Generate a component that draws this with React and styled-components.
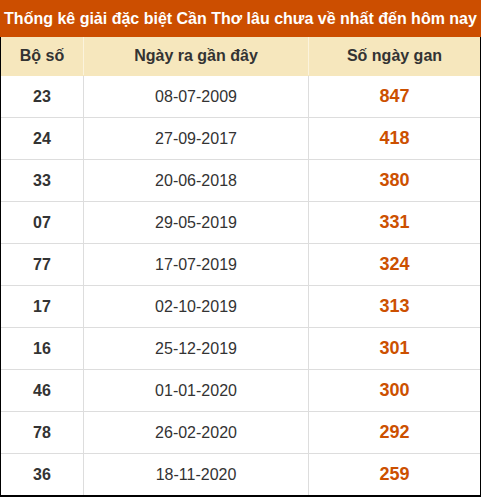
import React from "react";
import styled, { createGlobalStyle } from "styled-components";

const Global = createGlobalStyle`
  html, body { margin: 0; padding: 0; background: #fff; }
  body { font-family: "Liberation Sans", Arial, sans-serif; }
`;

const Wrap = styled.div`
  width: 481px;
  height: 497px;
  box-sizing: border-box;
  background: #000;
  padding: 0 1px 2px 1px;
  overflow: hidden;
`;

const Inner = styled.div`
  background: #fff;
`;

const Title = styled.div`
  height: 37px;
  margin: 0 -1px;
  background: #cc4e00;
  color: #fff;
  font-weight: bold;
  font-size: 16px;
  display: flex;
  align-items: center;
  justify-content: center;
  white-space: nowrap;
`;

const Row = styled.div`
  display: grid;
  grid-template-columns: 82px 225px 1fr;
  height: ${(p) => (p.$head ? 39 : 42)}px;
  box-sizing: border-box;
  background: ${(p) => (p.$head ? "#f6e7bd" : "#fff")};
  border-bottom: 1px solid ${(p) => (p.$head ? "#f6e7bd" : "#ddd")};
  &:last-child { border-bottom: none; height: 41px; }
`;

const Cell = styled.div`
  display: flex;
  align-items: center;
  justify-content: center;
  border-left: 1px solid ${(p) => (p.$head ? "#fbf3dc" : "#ddd")};
  &:first-child { border-left: none; }
  color: #333;
  font-size: ${(p) => (p.$big ? 18 : 16)}px;
  font-weight: ${(p) => (p.$bold ? "bold" : "normal")};
  ${(p) => p.$orange && "color: #cc5000;"}
`;

const data = [
  ["23", "08-07-2009", "847"],
  ["24", "27-09-2017", "418"],
  ["33", "20-06-2018", "380"],
  ["07", "29-05-2019", "331"],
  ["77", "17-07-2019", "324"],
  ["17", "02-10-2019", "313"],
  ["16", "25-12-2019", "301"],
  ["46", "01-01-2020", "300"],
  ["78", "26-02-2020", "292"],
  ["36", "18-11-2020", "259"],
];

export default function App() {
  return (
    <>
      <Global />
      <Wrap>
        <Title>Thống kê giải đặc biệt Cần Thơ lâu chưa về nhất đến hôm nay</Title>
        <Inner>
          <Row $head>
            <Cell $head $bold>Bộ số</Cell>
            <Cell $head $bold>Ngày ra gần đây</Cell>
            <Cell $head $bold>Số ngày gan</Cell>
          </Row>
          {data.map(([a, b, c]) => (
            <Row key={a}>
              <Cell $bold>{a}</Cell>
              <Cell>{b}</Cell>
              <Cell $bold $big $orange>{c}</Cell>
            </Row>
          ))}
        </Inner>
      </Wrap>
    </>
  );
}
